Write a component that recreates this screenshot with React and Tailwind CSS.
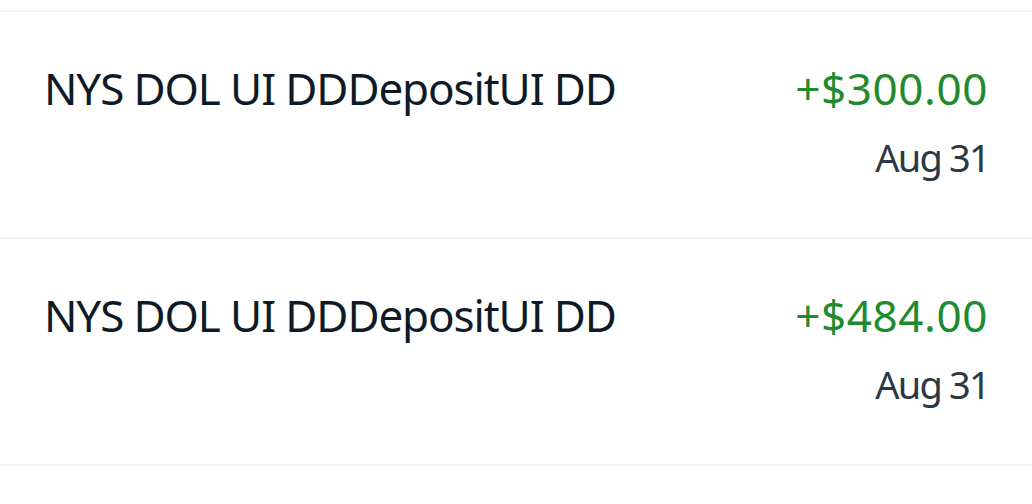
export default function App() {
  const rows = [
    { name: "NYS DOL UI DDDepositUI DD", amount: "+$300.00", date: "Aug 31" },
    { name: "NYS DOL UI DDDepositUI DD", amount: "+$484.00", date: "Aug 31" },
  ];
  return (
    <div className="w-[1032px] h-[504px] bg-white overflow-hidden" style={{ fontFamily: '"Noto Sans", sans-serif' }}>
      <div className="h-[10px]" />
      <div className="border-t-2 border-[#f3f3f3]">
        {rows.map((r, i) => (
          <div key={i} className="h-[227px] border-b-2 border-[#f3f3f3] flex justify-between pl-[44px] pr-[45px] pt-[46px]">
            <div className="text-[44px] leading-[60px] tracking-[-1.1px] text-[#0e1b27]">{r.name}</div>
            <div className="flex flex-col items-end">
              <div className="text-[44px] leading-[60px] tracking-[0.6px] mr-[-1px] text-[#208a2e]">{r.amount}</div>
              <div className="text-[38px] leading-[50px] tracking-[-1.8px] mt-[14px] mr-[-2px] text-[#2b3944]">{r.date}</div>
            </div>
          </div>
        ))}
      </div>
    </div>
  );
}
